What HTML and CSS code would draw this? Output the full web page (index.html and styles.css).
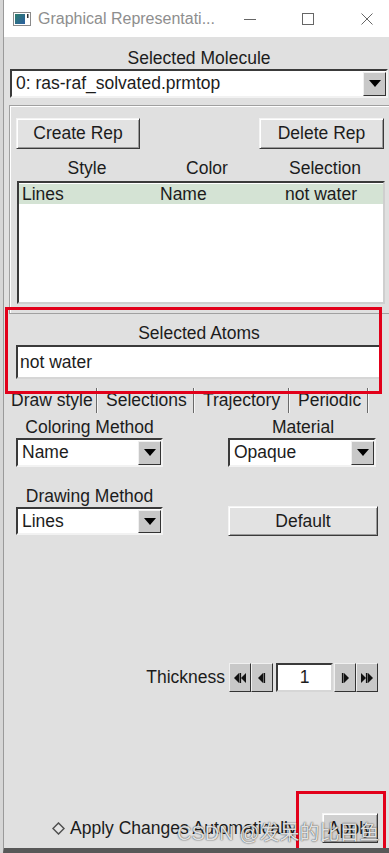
FILE: index.html
```html
<!DOCTYPE html>
<html lang="en">
<head>
    <meta charset="UTF-8">
    <meta name="viewport" content="width=device-width, initial-scale=1.0">
    <title>Graphical Representations</title>
    <link rel="stylesheet" href="styles.css">
</head>
<body>
    <div class="window">
        <!-- Barre de titre -->
        <div class="titlebar">
            <svg class="app-icon" width="18" height="14" viewBox="0 0 18 14">
                <defs>
                    <linearGradient id="ic" x1="0" y1="0" x2="1" y2="1">
                        <stop offset="0" stop-color="#2f7d6e"/>
                        <stop offset="1" stop-color="#2b5fa0"/>
                    </linearGradient>
                </defs>
                <rect x="0.5" y="0.5" width="17" height="13" fill="#fff" stroke="#8a8a8a"/>
                <rect x="2" y="2" width="10" height="10" fill="url(#ic)"/>
                <rect x="14" y="2" width="1.5" height="4" fill="#333"/>
            </svg>
            <span class="title-text">Graphical Representati...</span>
            <svg class="ctl ctl-min" width="12" height="12" viewBox="0 0 12 12"><path d="M0 6.5H12" stroke="#666" stroke-width="1"/></svg>
            <svg class="ctl ctl-max" width="12" height="12" viewBox="0 0 12 12"><rect x="0.5" y="0.5" width="11" height="11" fill="none" stroke="#666"/></svg>
            <svg class="ctl ctl-close" width="12" height="12" viewBox="0 0 12 12"><path d="M0.5 0.5L11.5 11.5M11.5 0.5L0.5 11.5" stroke="#666" stroke-width="1"/></svg>
        </div>

        <div class="main">
            <div class="label-center mol-label">Selected Molecule</div>
            <div class="menu">
                <span class="menu-text">0: ras-raf_solvated.prmtop</span>
                <span class="arrow-btn"><span class="tri"></span></span>
            </div>

            <!-- Cadre des représentations -->
            <div class="rep-frame">
                <div class="rep-buttons">
                    <button class="tk-button create-btn">Create Rep</button>
                    <button class="tk-button delete-btn">Delete Rep</button>
                </div>
                <div class="rep-header">
                    <span>Style</span>
                    <span>Color</span>
                    <span class="col-sel">Selection</span>
                </div>
                <div class="rep-list">
                    <div class="rep-row">
                        <span>Lines</span>
                        <span>Name</span>
                        <span>not water</span>
                    </div>
                </div>
            </div>

            <div class="label-center atoms-label">Selected Atoms</div>
            <div class="atoms-entry">not water</div>

            <!-- Onglets -->
            <div class="tabs">
                <span class="tab tab-active">Draw style</span>
                <span class="tab tab-sel">Selections</span>
                <span class="tab tab-traj">Trajectory</span>
                <span class="tab tab-per">Periodic</span>
            </div>

            <div class="options">
                <div class="opt-cell">
                    <div class="label-center">Coloring Method</div>
                    <div class="menu small-menu">
                        <span class="menu-text">Name</span>
                        <span class="arrow-btn"><span class="tri"></span></span>
                    </div>
                </div>
                <div class="opt-cell">
                    <div class="label-center">Material</div>
                    <div class="menu small-menu">
                        <span class="menu-text">Opaque</span>
                        <span class="arrow-btn"><span class="tri"></span></span>
                    </div>
                </div>
                <div class="opt-cell row2">
                    <div class="label-center">Drawing Method</div>
                    <div class="menu small-menu lines-menu">
                        <span class="menu-text">Lines</span>
                        <span class="arrow-btn"><span class="tri"></span></span>
                    </div>
                </div>
                <div class="opt-cell row2 default-cell">
                    <button class="tk-button default-btn">Default</button>
                </div>
            </div>

            <div class="thickness">
                <span class="thick-label">Thickness</span>
                <span class="spin-btn">
                    <svg width="12" height="12" viewBox="0 0 12 12"><polygon points="0,6 5,1 5,11" fill="#111"/><rect x="5.5" y="1" width="1.6" height="10" fill="#111"/><polygon points="7,6 12,1 12,11" fill="#111"/></svg>
                </span>
                <span class="spin-btn">
                    <svg width="12" height="12" viewBox="0 0 12 12"><polygon points="2,6 7,1 7,11" fill="#111"/><rect x="7.5" y="1" width="1.6" height="10" fill="#111"/></svg>
                </span>
                <span class="spin-entry">1</span>
                <span class="spin-btn">
                    <svg width="12" height="12" viewBox="0 0 12 12"><rect x="2.9" y="1" width="1.6" height="10" fill="#111"/><polygon points="10,6 5,1 5,11" fill="#111"/></svg>
                </span>
                <span class="spin-btn">
                    <svg width="12" height="12" viewBox="0 0 12 12"><polygon points="5,6 0,1 0,11" fill="#111"/><rect x="4.9" y="1" width="1.6" height="10" fill="#111"/><polygon points="12,6 7,1 7,11" fill="#111"/></svg>
                </span>
            </div>

            <div class="apply-row">
                <svg class="diamond" width="13" height="13" viewBox="0 0 13 13">
                    <polygon points="6.5,1 12,6.5 6.5,12 1,6.5" fill="#e6e6e6" stroke="#505050" stroke-width="1.5"/>
                </svg>
                <span class="auto-text">Apply Changes Automatically</span>
                <button class="tk-button apply-btn">Apply</button>
            </div>
        </div>

        <!-- Annotations et filigrane -->
        <div class="red-box box-atoms"></div>
        <div class="red-box box-apply"></div>
        <div class="watermark">CSDN @发呆的比目鱼</div>
    </div>
</body>
</html>
```

FILE: styles.css
```css
* {
    box-sizing: border-box;
}
body {
    margin: 0;
    background-color: #d6d6d6;
    font-family: "Liberation Sans", Arial, sans-serif;
    font-size: 17.5px;
    color: #1c1c1c;
}
.window {
    position: relative;
    margin-left: 3px;
    width: 386px;
    height: 853px;
    border-left: 1px solid #9a9a9a;
    border-bottom: 5px solid #585858;
    background-color: #e0e0e0;
    display: flex;
    flex-direction: column;
    overflow: hidden;
}

/* Barre de titre */
.titlebar {
    height: 37px;
    flex-shrink: 0;
    background-color: #fff;
    display: flex;
    align-items: center;
    padding-left: 9px;
}
.app-icon {
    flex-shrink: 0;
    margin-right: 7px;
}
.title-text {
    flex: 1;
    font-size: 16px;
    color: #8e8e8e;
    white-space: nowrap;
}
.ctl {
    flex-shrink: 0;
}
.ctl-min {
    margin-right: 46px;
}
.ctl-max {
    margin-right: 47px;
}
.ctl-close {
    margin-right: 16px;
}

.main {
    padding: 0 1px 0 6px;
    display: flex;
    flex-direction: column;
}
.label-center {
    height: 20px;
    line-height: 20px;
    text-align: center;
    white-space: nowrap;
}
.mol-label {
    margin-top: 11px;
}

/* Menus déroulants */
.menu {
    height: 29px;
    margin-top: 1px;
    display: flex;
    align-items: center;
    background-color: #fff;
    border: 2px solid;
    border-color: #3a3a3a #f2f2f2 #f2f2f2 #3a3a3a;
    padding-left: 4px;
}
.menu-text {
    flex: 1;
    white-space: nowrap;
}
.arrow-btn {
    width: 23px;
    height: 24px;
    flex-shrink: 0;
    background-color: #c8c8c8;
    border: 1px solid;
    border-color: #f0f0f0 #333 #333 #f0f0f0;
    display: flex;
    align-items: center;
    justify-content: center;
}
.tri {
    width: 0;
    height: 0;
    border-left: 6px solid transparent;
    border-right: 6px solid transparent;
    border-top: 7px solid #000;
}

/* Cadre des représentations */
.rep-frame {
    margin: 7px -2px 0 -1px;
    height: 209px;
    border: 1px solid #a0a0a0;
    box-shadow: inset 1px 1px 0 #fff;
    padding: 12px 5px 0 6px;
}
.rep-buttons {
    display: flex;
    justify-content: space-between;
}
.tk-button {
    font-family: "Liberation Sans", Arial, sans-serif;
    font-size: 17.5px;
    color: #1c1c1c;
    background-color: #e2e2e2;
    border: 1px solid;
    border-color: #f4f4f4 #3a3a3a #3a3a3a #f4f4f4;
    box-shadow: inset 1px 1px 0 #fff, inset -1px -1px 0 #9a9a9a;
    padding: 0;
    height: 31px;
}
.create-btn {
    width: 124px;
}
.delete-btn {
    width: 125px;
}
.rep-header {
    margin: 9px -1px 0 1px;
    height: 20px;
    line-height: 20px;
    display: grid;
    grid-template-columns: 140px 100px 128px;
    text-align: center;
}
.col-sel {
    padding-left: 8px;
}
.rep-list {
    margin: 3px -1px 0 1px;
    height: 123px;
    background-color: #fff;
    border: 2px solid;
    border-color: #3a3a3a #cfcfcf #cfcfcf #3a3a3a;
    padding: 1px 0;
}
.rep-row {
    height: 20px;
    line-height: 20px;
    background-color: #d4e3d4;
    display: grid;
    grid-template-columns: 138px 125px auto;
    padding-left: 3px;
    white-space: nowrap;
}

.atoms-label {
    margin-top: 9px;
}
.atoms-entry {
    margin: 2px 6px 0 6px;
    height: 34px;
    line-height: 30px;
    background-color: #fff;
    border: 2px solid;
    border-color: #3a3a3a #d6d6d6 #d6d6d6 #3a3a3a;
    padding-left: 2px;
}

/* Onglets */
.tabs {
    margin: 9px 0 0 -2px;
    height: 25px;
    display: flex;
}
.tab {
    height: 25px;
    line-height: 25px;
    border-right: 1px solid #6a6a6a;
    box-shadow: 1px 0 0 #f4f4f4;
    padding-left: 9px;
    white-space: nowrap;
}
.tab-active {
    width: 89px;
    padding-left: 3px;
}
.tab-sel {
    width: 97px;
}
.tab-traj {
    width: 95px;
}
.tab-per {
    width: 79px;
}

/* Options de dessin */
.options {
    margin-top: 4px;
    padding-left: 6px;
    display: grid;
    grid-template-columns: 147px 150px;
    column-gap: 65px;
}
.row2 {
    margin-top: 19px;
}
.small-menu {
    width: 147px;
}
.options .opt-cell:nth-child(2) .small-menu {
    width: 148px;
}
.lines-menu {
    height: 28px;
}
.lines-menu .arrow-btn {
    height: 23px;
}
.default-cell {
    padding-top: 20px;
}
.default-btn {
    width: 150px;
    height: 30px;
}

/* Épaisseur */
.thickness {
    margin: 127px 10px 0 0;
    height: 29px;
    display: flex;
    justify-content: flex-end;
    align-items: center;
}
.thick-label {
    margin-right: 4px;
}
.spin-btn {
    width: 22px;
    height: 29px;
    background-color: #c8c8c8;
    border: 1px solid;
    border-color: #f0f0f0 #333 #333 #f0f0f0;
    display: flex;
    align-items: center;
    justify-content: center;
}
.spin-entry {
    width: 57px;
    height: 29px;
    margin: 0 1px 0 3px;
    line-height: 25px;
    text-align: center;
    background-color: #fff;
    border: 2px solid;
    border-color: #3a3a3a #d6d6d6 #d6d6d6 #3a3a3a;
}

/* Ligne du bas */
.apply-row {
    margin: 121px 10px 0 0;
    height: 30px;
    display: flex;
    align-items: center;
    padding-left: 42px;
}
.diamond {
    margin-right: 5px;
    flex-shrink: 0;
}
.auto-text {
    white-space: nowrap;
}
.apply-btn {
    margin-left: auto;
    width: 56px;
    height: 30px;
    background-color: #d0d0d0;
    flex-shrink: 0;
}

.red-box {
    position: absolute;
    border: 3px solid #e2001a;
}
.box-atoms {
    left: 1px;
    top: 307px;
    width: 377px;
    height: 87px;
}
.box-apply {
    left: 292px;
    top: 791px;
    width: 90px;
    height: 60px;
}
.watermark {
    position: absolute;
    left: 173px;
    top: 817px;
    font-family: "Liberation Sans", "Noto Sans CJK SC", sans-serif;
    font-size: 20px;
    color: rgba(255, 255, 255, 0.85);
    text-shadow: 0 0 1px rgba(0, 0, 0, 0.7), 0 0 2px rgba(0, 0, 0, 0.4);
    white-space: nowrap;
}
```
